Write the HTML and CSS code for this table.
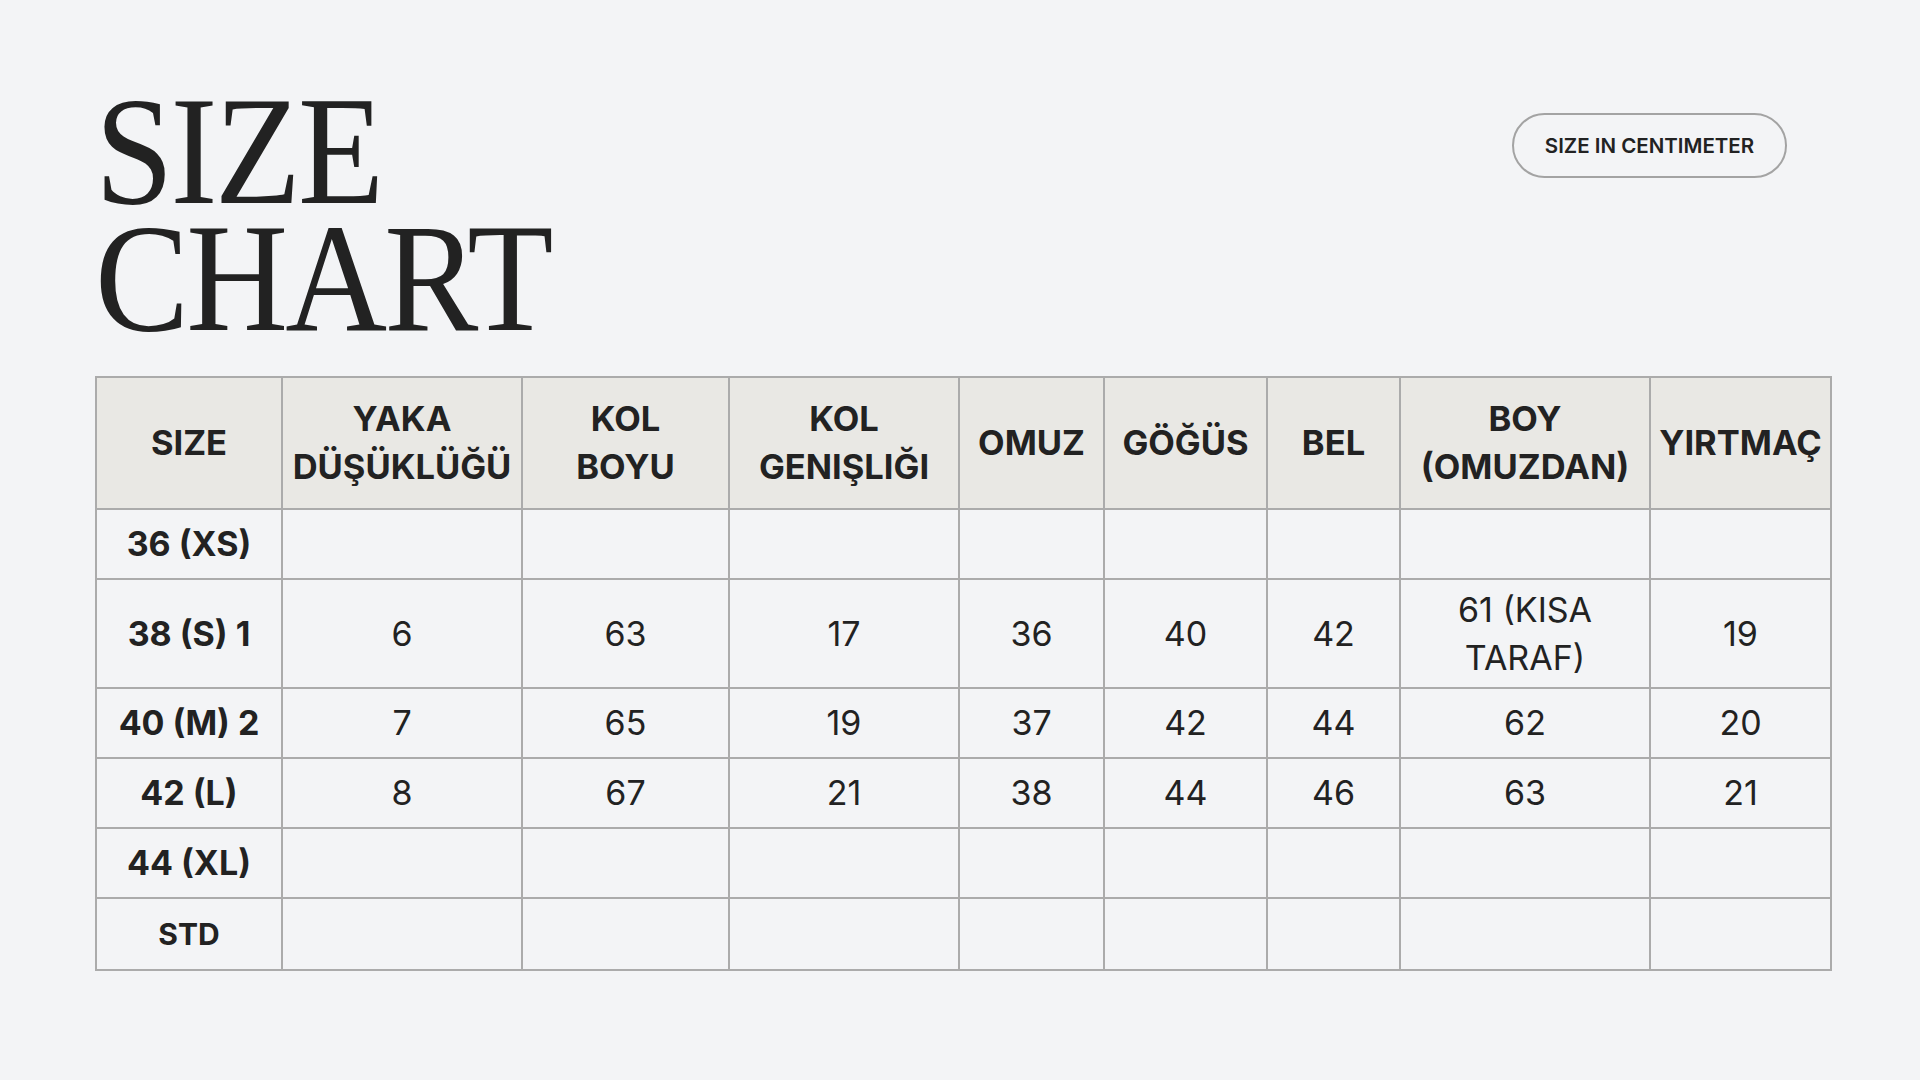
FILE: index.html
```html
<!DOCTYPE html>
<html lang="tr">
<head>
<meta charset="utf-8">
<title>Size Chart</title>
<link rel="stylesheet" href="styles.css">
</head>
<body>
<main class="page">
  <header class="top">
    <h1 class="title"><span class="tline">SIZE</span><span class="tline">CHART</span></h1>
    <div class="pill">SIZE IN CENTIMETER</div>
  </header>
  <table class="chart">
    <colgroup>
      <col class="c1"><col class="c2"><col class="c3"><col class="c4"><col class="c5"><col class="c6"><col class="c7"><col class="c8"><col class="c9">
    </colgroup>
    <thead>
      <tr class="r-head">
        <th>SIZE</th>
        <th>YAKA<br>DÜŞÜKLÜĞÜ</th>
        <th>KOL<br>BOYU</th>
        <th>KOL<br>GENIŞLIĞI</th>
        <th>OMUZ</th>
        <th>GÖĞÜS</th>
        <th>BEL</th>
        <th>BOY<br>(OMUZDAN)</th>
        <th>YIRTMAÇ</th>
      </tr>
    </thead>
    <tbody>
      <tr class="r-std">
        <th>36 (XS)</th><td></td><td></td><td></td><td></td><td></td><td></td><td></td><td></td>
      </tr>
      <tr class="r-tall">
        <th>38 (S) 1</th><td>6</td><td>63</td><td>17</td><td>36</td><td>40</td><td>42</td><td>61 (KISA<br>TARAF)</td><td>19</td>
      </tr>
      <tr class="r-std">
        <th>40 (M) 2</th><td>7</td><td>65</td><td>19</td><td>37</td><td>42</td><td>44</td><td>62</td><td>20</td>
      </tr>
      <tr class="r-std">
        <th>42 (L)</th><td>8</td><td>67</td><td>21</td><td>38</td><td>44</td><td>46</td><td>63</td><td>21</td>
      </tr>
      <tr class="r-std">
        <th>44 (XL)</th><td></td><td></td><td></td><td></td><td></td><td></td><td></td><td></td>
      </tr>
      <tr class="r-last">
        <th class="small">STD</th><td></td><td></td><td></td><td></td><td></td><td></td><td></td><td></td>
      </tr>
    </tbody>
  </table>
</main>
</body>
</html>
```
FILE: styles.css
```css
* { box-sizing: border-box; }
html, body {
  margin: 0;
  padding: 0;
  background: #f3f4f6;
  color: #222222;
}
.page {
  width: 1920px;
  height: 1080px;
  padding: 88px 91px 0 95px;
  font-family: Inter, "Noto Sans", sans-serif;
}
.top {
  display: flex;
  justify-content: space-between;
  align-items: flex-start;
  margin-bottom: 34px;
}
.title {
  margin: 0;
  font-family: "Liberation Serif", "Times New Roman", serif;
  font-weight: 400;
  font-size: 155px;
  line-height: 127px;
  letter-spacing: -0.02em;
  color: #222222;
  transform: scaleX(0.91);
  transform-origin: left top;
}
.tline {
  display: block;
  height: 127px;
}
.pill {
  margin-top: 25px;
  margin-right: 42px;
  width: 275px;
  height: 65px;
  border: 2px solid #a3a3a3;
  border-radius: 33px;
  display: flex;
  align-items: center;
  justify-content: center;
  font-size: 20.5px;
  font-weight: 600;
  color: #222222;
}
.chart {
  width: 1735px;
  table-layout: fixed;
  border-collapse: collapse;
  font-size: 34px;
  line-height: 48px;
}
.c1 { width: 186px; }
.c2 { width: 240px; }
.c3 { width: 207px; }
.c4 { width: 230px; }
.c5 { width: 145px; }
.c6 { width: 163px; }
.c7 { width: 133px; }
.c8 { width: 250px; }
.c9 { width: 181px; }
.chart th, .chart td {
  border: 2px solid #ababab;
  text-align: center;
  vertical-align: middle;
  padding: 0;
  color: #222222;
}
.chart th {
  font-weight: 700;
}
.chart thead th {
  background: #e9e8e4;
  white-space: nowrap;
  font-size: 34.5px;
}
.chart td {
  font-weight: 400;
}
.r-head { height: 132px; }
.r-std { height: 70px; }
.r-tall { height: 109px; }
.r-last { height: 72px; }
.chart th.small { font-size: 30px; }
```
